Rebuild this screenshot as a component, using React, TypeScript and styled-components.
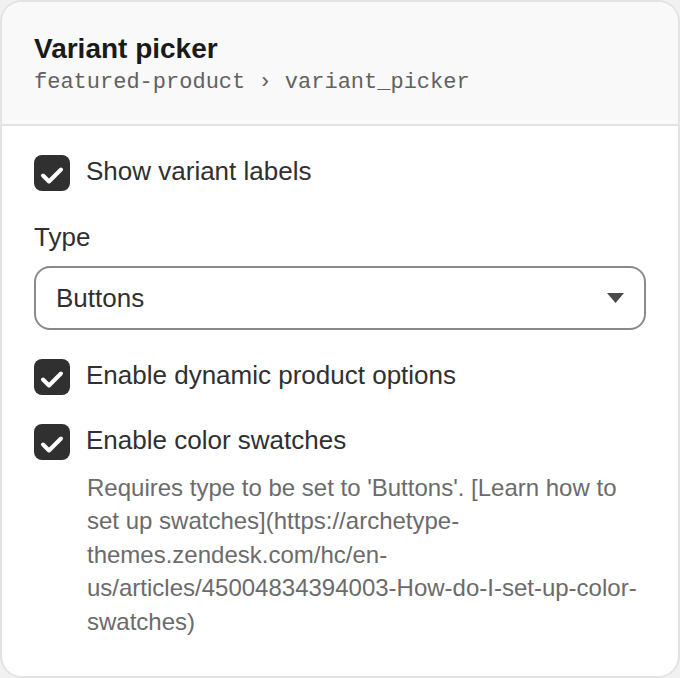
import React from "react";
import styled, { createGlobalStyle } from "styled-components";

const Global = createGlobalStyle`
  html, body { margin: 0; padding: 0; background: #f1f1f1; }
  body { font-family: "Liberation Sans", Arial, sans-serif; }
  * { box-sizing: border-box; }
`;

const Card = styled.div`
  width: 680px;
  height: 678px;
  background: #ffffff;
  border: 2px solid #e3e3e3;
  border-radius: 22px;
  overflow: hidden;
  display: flex;
  flex-direction: column;
`;

const Header = styled.header`
  background: #f9f9f9;
  border-bottom: 2px solid #e3e3e3;
  padding: 30px 32px 26px;
  display: flex;
  flex-direction: column;
  gap: 2px;
`;

const Title = styled.h1`
  margin: 0;
  font-size: 28px;
  line-height: 34px;
  font-weight: 700;
  color: #1a1a1a;
`;

const Path = styled.div`
  font-family: "Liberation Mono", "Courier New", monospace;
  font-size: 22px;
  line-height: 30px;
  color: #616161;
`;

const Body = styled.div`
  padding: 29px 32px 0;
  display: flex;
  flex-direction: column;
  gap: 29px;
`;

const Field = styled.div`
  display: flex;
  flex-direction: column;
`;

const CheckRow = styled.label`
  display: flex;
  align-items: center;
  gap: 16px;
  height: 36px;
  font-size: 26px;
  color: #303030;
`;

const RowText = styled.span`
  line-height: 32px;
  padding-bottom: 4px;
`;

const Box = styled.span`
  width: 36px;
  height: 36px;
  flex: none;
  border-radius: 8px;
  background: #303030;
  display: flex;
  align-items: center;
  justify-content: center;
`;

const Help = styled.p`
  margin: 11px 0 0 53px;
  font-size: 24px;
  line-height: 33.4px;
  color: #6b6b6b;
  overflow-wrap: break-word;
`;

const Label = styled.div`
  font-size: 26px;
  line-height: 34px;
  color: #303030;
  margin-bottom: 12px;
`;

const Select = styled.div`
  height: 64px;
  border: 2px solid #8a8a8a;
  border-radius: 16px;
  padding: 0 20px 0 20px;
  display: flex;
  align-items: center;
  justify-content: space-between;
  font-size: 26px;
  color: #303030;
  background: #fff;
`;

const Checkbox = () => (
  <Box>
    <svg width="36" height="36" viewBox="0 0 36 36" fill="none">
      <path
        d="M9 20.5L15 26.5L27 14.5"
        stroke="#ffffff"
        strokeWidth="4"
        strokeLinecap="round"
        strokeLinejoin="round"
      />
    </svg>
  </Box>
);

const Caret = () => (
  <svg width="17" height="10" viewBox="0 0 17 10">
    <path d="M0 0H17L8.5 10Z" fill="#4a4a4a" />
  </svg>
);

export default function App() {
  return (
    <>
      <Global />
      <Card>
        <Header>
          <Title>Variant picker</Title>
          <Path>featured-product › variant_picker</Path>
        </Header>
        <Body>
          <Field>
            <CheckRow>
              <Checkbox />
              <RowText>Show variant labels</RowText>
            </CheckRow>
          </Field>
          <Field>
            <Label>Type</Label>
            <Select>
              <span>Buttons</span>
              <Caret />
            </Select>
          </Field>
          <Field>
            <CheckRow>
              <Checkbox />
              <RowText>Enable dynamic product options</RowText>
            </CheckRow>
          </Field>
          <Field>
            <CheckRow>
              <Checkbox />
              <RowText>Enable color swatches</RowText>
            </CheckRow>
            <Help>
              Requires type to be set to 'Buttons'. [Learn how to set up
              swatches](https://archetype-themes.zendesk.com/hc/en-us/articles/45004834394003-How-do-I-set-up-color-swatches)
            </Help>
          </Field>
        </Body>
      </Card>
    </>
  );
}
